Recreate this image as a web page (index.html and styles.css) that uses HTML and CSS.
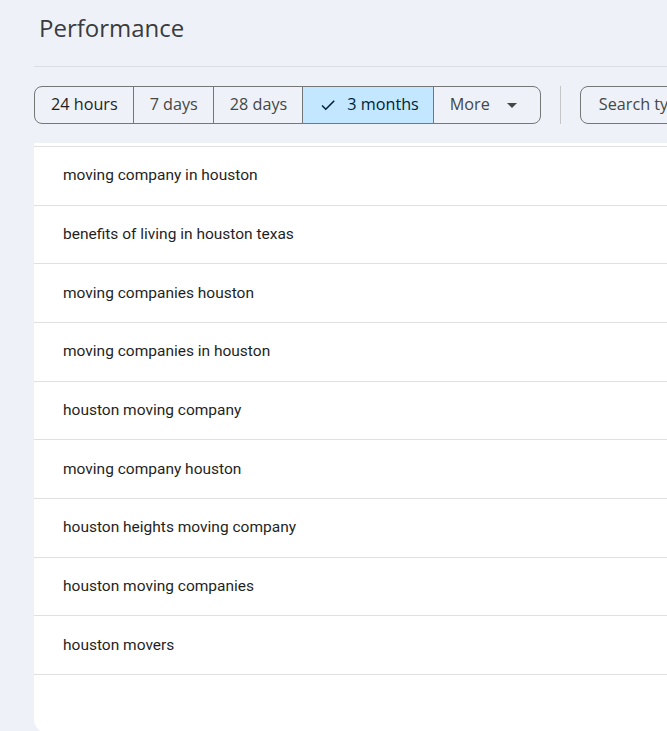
FILE: index.html
```html
<!DOCTYPE html>
<html lang="en">
<head>
<meta charset="utf-8">
<title>Performance</title>
<link rel="stylesheet" href="styles.css">
</head>
<body>
<main class="page">
  <header class="page-header">
    <h1 class="page-title">Performance</h1>
  </header>
  <div class="toolbar">
    <div class="seg-group">
      <button class="seg seg-focus">24 hours</button>
      <button class="seg">7 days</button>
      <button class="seg">28 days</button>
      <button class="seg seg-selected">
        <svg class="check" viewBox="0 0 24 24" width="18" height="18"><path d="M9 16.17 4.83 12l-1.42 1.41L9 19 21 7l-1.41-1.41z"/></svg>
        3 months
      </button>
      <button class="seg seg-more">More
        <svg class="caret" viewBox="0 0 24 24" width="24" height="24"><path d="M7 10l5 5 5-5z"/></svg>
      </button>
    </div>
    <span class="vdivider"></span>
    <button class="chip">Search type: Web</button>
  </div>
  <section class="card">
    <div class="row">moving company in houston</div>
    <div class="row">benefits of living in houston texas</div>
    <div class="row">moving companies houston</div>
    <div class="row">moving companies in houston</div>
    <div class="row">houston moving company</div>
    <div class="row">moving company houston</div>
    <div class="row">houston heights moving company</div>
    <div class="row">houston moving companies</div>
    <div class="row">houston movers</div>
    <div class="row row-empty"></div>
  </section>
</main>
</body>
</html>
```
FILE: styles.css
```css
html, body {
  margin: 0;
  padding: 0;
  height: 100%;
  overflow: hidden;
}
body {
  background: #eef2f8;
  font-family: Roboto, "Liberation Sans", sans-serif;
}
.page {
  padding-left: 34px;
  display: flex;
  flex-direction: column;
  height: 100%;
  box-sizing: border-box;
}
.page-header {
  height: 66px;
  border-bottom: 1px solid #dadde2;
  display: flex;
  align-items: flex-start;
}
.page-title {
  margin: 11px 0 0 5px;
  font-family: "Open Sans", sans-serif;
  font-weight: 400;
  font-size: 24px;
  line-height: 34px;
  color: #3a3b3d;
  letter-spacing: 0;
}
.toolbar {
  display: flex;
  align-items: center;
  padding: 19px 0;
  gap: 19px;
  white-space: nowrap;
  overflow: hidden;
}
.seg-group {
  display: flex;
  height: 38px;
  border: 1px solid #747775;
  border-radius: 8px;
  overflow: hidden;
  box-sizing: border-box;
  flex: none;
}
.seg {
  display: flex;
  align-items: center;
  gap: 10px;
  height: 100%;
  padding: 0 15px 2px 16px;
  box-sizing: border-box;
  border: 0;
  border-left: 1px solid #747775;
  background: transparent;
  font-family: "Open Sans", sans-serif;
  font-size: 16.2px;
  font-weight: 500;
  color: #444746;
  cursor: pointer;
}
.seg:first-child { border-left: 0; }
.seg-focus { color: #1f1f1f; }
.seg-selected {
  background: #c2e7ff;
  color: #001d35;
  padding-right: 14px;
}
.check { fill: #001d35; margin-top: 2px; }
.seg-more { gap: 10px; padding-right: 16px; }
.caret { fill: #444746; margin-top: 2px; }
.vdivider {
  width: 1px;
  height: 38px;
  background: #c4c7c5;
  flex: none;
}
.chip {
  height: 38px;
  padding: 0 18px 2px;
  border: 1px solid #747775;
  border-radius: 8px;
  background: transparent;
  font-family: "Open Sans", sans-serif;
  font-size: 16.2px;
  font-weight: 500;
  color: #444746;
  flex: none;
}
.card {
  flex: 1;
  background: #fff;
  border-bottom-left-radius: 14px;
  padding-top: 3px;
  margin-bottom: -2px;
}
.row {
  height: 58.67px;
  box-sizing: border-box;
  border-top: 1px solid #e0e0e0;
  padding-left: 29px;
  padding-bottom: 1px;
  display: flex;
  align-items: center;
  font-size: 15.5px;
  color: #1f1f1f;
}
.row-empty { height: auto; }
```
